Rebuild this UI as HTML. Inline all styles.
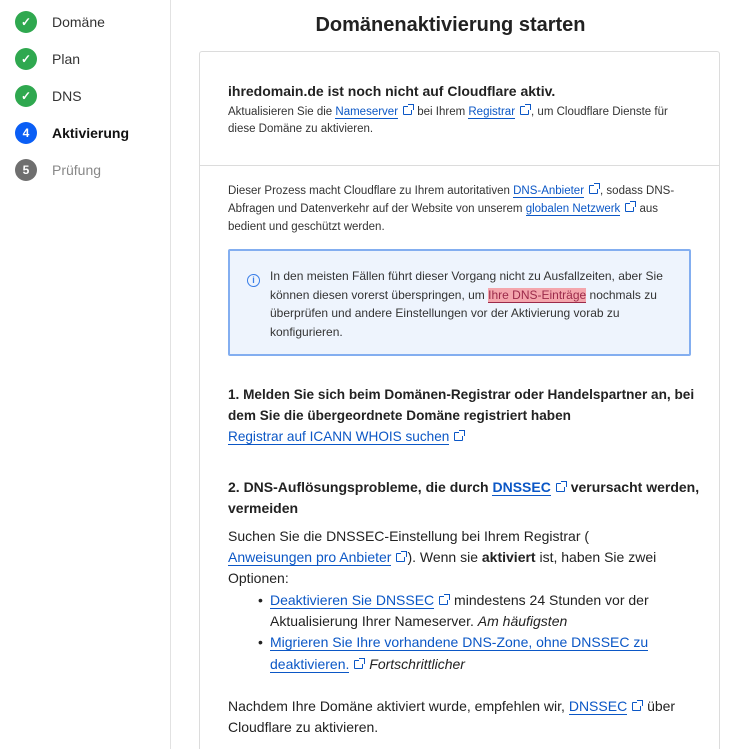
<!DOCTYPE html>
<html><head><meta charset="utf-8"><style>
*{margin:0;padding:0;box-sizing:border-box}
html,body{width:730px;height:749px;overflow:hidden}
body{background:#fff;font-family:"Liberation Sans",sans-serif;color:#222;position:relative}
.side{position:absolute;left:0;top:0;width:171px;height:749px;border-right:1px solid #e2e2e2}
.st{position:absolute;left:15px;height:22px;display:flex;align-items:center;font-size:14px;color:#333}
.c{width:22px;height:22px;border-radius:50%;margin-right:15px;display:flex;align-items:center;justify-content:center;color:#fff;font-size:12px;font-weight:bold}
.g{background:#2fa84f}.b{background:#0a5ef5}.gr{background:#6f6f6f}
h1{position:absolute;left:171px;width:559px;text-align:center;top:14px;font-size:20px;font-weight:bold;color:#222}
.card{position:absolute;left:199px;top:51px;width:521px;height:720px;border:1px solid #dcdcdc;border-radius:3px}
.div{position:absolute;left:0;right:0;top:113px;border-top:1px solid #dcdcdc}
.t{position:absolute;left:28px;white-space:nowrap}
a{color:#0b57c6;text-decoration:none;border-bottom:1px solid #0b57c6}
.x{display:inline-block;width:9px;height:9px;border:1.2px solid #0b57c6;border-radius:1px;margin:0 2px 0 5px;position:relative;vertical-align:0}
.x:after{content:"";position:absolute;right:-3px;top:-3px;width:5px;height:5px;border-top:1.2px solid #0b57c6;border-right:1.2px solid #0b57c6;background:#fff}
.info{position:absolute;left:28px;top:197px;width:463px;height:107px;border:2px solid #83aef0;background:#eef4fd;border-radius:2px}
.ic{position:absolute;left:17px;top:23px;width:13px;height:13px;border:1.3px solid #3a7ee8;border-radius:50%;color:#3a7ee8;font-size:9px;font-weight:bold;text-align:center;line-height:11px}
.hl{background:#f4a6ad;}
</style></head><body>
<div class="side">
<div class="st" style="top:11px"><span class="c g">✓</span>Domäne</div>
<div class="st" style="top:48px"><span class="c g">✓</span>Plan</div>
<div class="st" style="top:85px"><span class="c g">✓</span>DNS</div>
<div class="st" style="top:122px;font-weight:bold;color:#111"><span class="c b">4</span>Aktivierung</div>
<div class="st" style="top:159px;color:#888"><span class="c gr">5</span>Prüfung</div>
</div>
<h1>Domänenaktivierung starten</h1>
<div class="card">
<div class="t" style="top:31px;font-size:14px;font-weight:bold">ihredomain.de ist noch nicht auf Cloudflare aktiv.</div>
<div class="t" style="top:52px;font-size:11.5px;line-height:17px;color:#333">Aktualisieren Sie die <a>Nameserver</a><span class="x"></span> bei Ihrem <a>Registrar</a><span class="x"></span>, um Cloudflare Dienste für<br>diese Domäne zu aktivieren.</div>
<div class="div"></div>
<div class="t" style="top:130px;font-size:11.5px;line-height:18px;color:#333">Dieser Prozess macht Cloudflare zu Ihrem autoritativen <a>DNS-Anbieter</a><span class="x"></span>, sodass DNS-<br>Abfragen und Datenverkehr auf der Website von unserem <a>globalen Netzwerk</a><span class="x"></span> aus<br>bedient und geschützt werden.</div>
<div class="info"><div class="ic">i</div>
<div class="t" style="left:40px;top:16px;font-size:12px;line-height:18.7px;color:#333">In den meisten Fällen führt dieser Vorgang nicht zu Ausfallzeiten, aber Sie<br>können diesen vorerst überspringen, um <span class="hl"><a style="color:#9b2a4a;border-color:#9b2a4a">Ihre DNS-Einträge</a></span> nochmals zu<br>überprüfen und andere Einstellungen vor der Aktivierung vorab zu<br>konfigurieren.</div></div>
<div class="t" style="top:332px;font-size:13.6px;line-height:21px;color:#222"><b>1. Melden Sie sich beim Domänen-Registrar oder Handelspartner an, bei<br>dem Sie die übergeordnete Domäne registriert haben</b><br><a>Registrar auf ICANN WHOIS suchen</a><span class="x"></span></div>
<div class="t" style="top:425px;font-size:14px;line-height:21px;color:#222"><b>2. DNS-Auflösungsprobleme, die durch <a>DNSSEC</a><span class="x"></span> verursacht werden,<br>vermeiden</b></div>
<div class="t" style="top:474px;font-size:14px;line-height:21.2px;color:#222">Suchen Sie die DNSSEC-Einstellung bei Ihrem Registrar (<br><a>Anweisungen pro Anbieter</a><span class="x"></span>). Wenn sie <b>aktiviert</b> ist, haben Sie zwei<br>Optionen:</div>
<div class="t" style="top:538px;left:58px;font-size:14px;line-height:21.2px;color:#222">•</div>
<div class="t" style="top:580px;left:58px;font-size:14px;line-height:21.2px;color:#222">•</div>
<div class="t" style="top:538px;left:70px;font-size:14px;line-height:21.2px;color:#222"><a>Deaktivieren Sie DNSSEC</a><span class="x"></span> mindestens 24 Stunden vor der<br>Aktualisierung Ihrer Nameserver. <i>Am häufigsten</i><br><a>Migrieren Sie Ihre vorhandene DNS-Zone, ohne DNSSEC zu</a><br><a>deaktivieren.</a><span class="x"></span> <i>Fortschrittlicher</i></div>
<div class="t" style="top:644px;font-size:14px;line-height:21.2px;color:#222">Nachdem Ihre Domäne aktiviert wurde, empfehlen wir, <a>DNSSEC</a><span class="x"></span> über<br>Cloudflare zu aktivieren.</div>
</div>
</body></html>
